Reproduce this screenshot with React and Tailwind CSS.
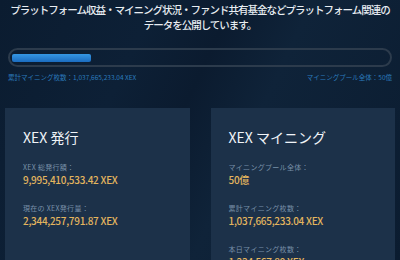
const jp = { fontFamily: '"Noto Sans CJK JP", "Noto Sans", sans-serif' };

function Stat({ label, value }) {
    return (
        <div className="flex flex-col">
            <span className="text-[7px] leading-[12px] tracking-[0.3px] text-[#7890a8]">{label}</span>
            <span className="text-[10px] font-medium leading-[14px] tracking-[-0.3px] text-[#e3b55e]">{value}</span>
        </div>
    );
}

function Card({ title, stats }) {
    return (
        <div className="flex flex-col bg-[#1c3149] px-[18px] pt-[19px]">
            <h2 className="text-[14px] leading-[20px] text-[#f0f4f8]">{title}</h2>
            <div className="mt-[14px] flex flex-col gap-[15px]">
                {stats.map((s) => (
                    <Stat key={s.label} label={s.label} value={s.value} />
                ))}
            </div>
        </div>
    );
}

export default function App() {
    return (
        <div
            style={jp}
            className="relative h-[260px] w-[400px] overflow-hidden bg-[linear-gradient(115deg,#0b1c30_0%,#0d2036_30%,#0b1b2f_45%,#0f2339_60%,#0b1c30_100%)]"
        >
            <p className="px-[6px] pt-[2px] text-center text-[10.5px] font-medium leading-[15px] tracking-[-1px] text-[#e8edf2]">
                プラットフォーム収益・マイニング状況・ファンド共有基金などプラットフォーム関連の
                <br />
                データを公開しています。
            </p>

            <div className="mx-[8px] mt-[16px] flex h-[19px] items-center rounded-full border-2 border-[#2c3b4c] px-[2px]">
                <div className="h-[8px] w-[79px] rounded-[2px] bg-[linear-gradient(#3597e4,#1b6cc0)]" />
            </div>

            <div className="mx-[8px] mt-[5px] flex justify-between text-[6.5px] leading-[10px] text-[#2b7bbd]">
                <span>累計マイニング枚数：1,037,665,233.04 XEX</span>
                <span>マイニングプール全体：50億</span>
            </div>

            <div className="mt-[26px] grid grid-cols-2 gap-[21px] px-[5px]">
                <Card
                    title="XEX 発行"
                    stats={[
                        { label: "XEX 総発行額：", value: "9,995,410,533.42 XEX" },
                        { label: "現在の XEX発行量：", value: "2,344,257,791.87 XEX" },
                    ]}
                />
                <Card
                    title="XEX マイニング"
                    stats={[
                        { label: "マイニングプール全体：", value: "50億" },
                        { label: "累計マイニング枚数：", value: "1,037,665,233.04 XEX" },
                        { label: "本日マイニング枚数：", value: "1,234,567.89 XEX" },
                    ]}
                />
            </div>
        </div>
    );
}
